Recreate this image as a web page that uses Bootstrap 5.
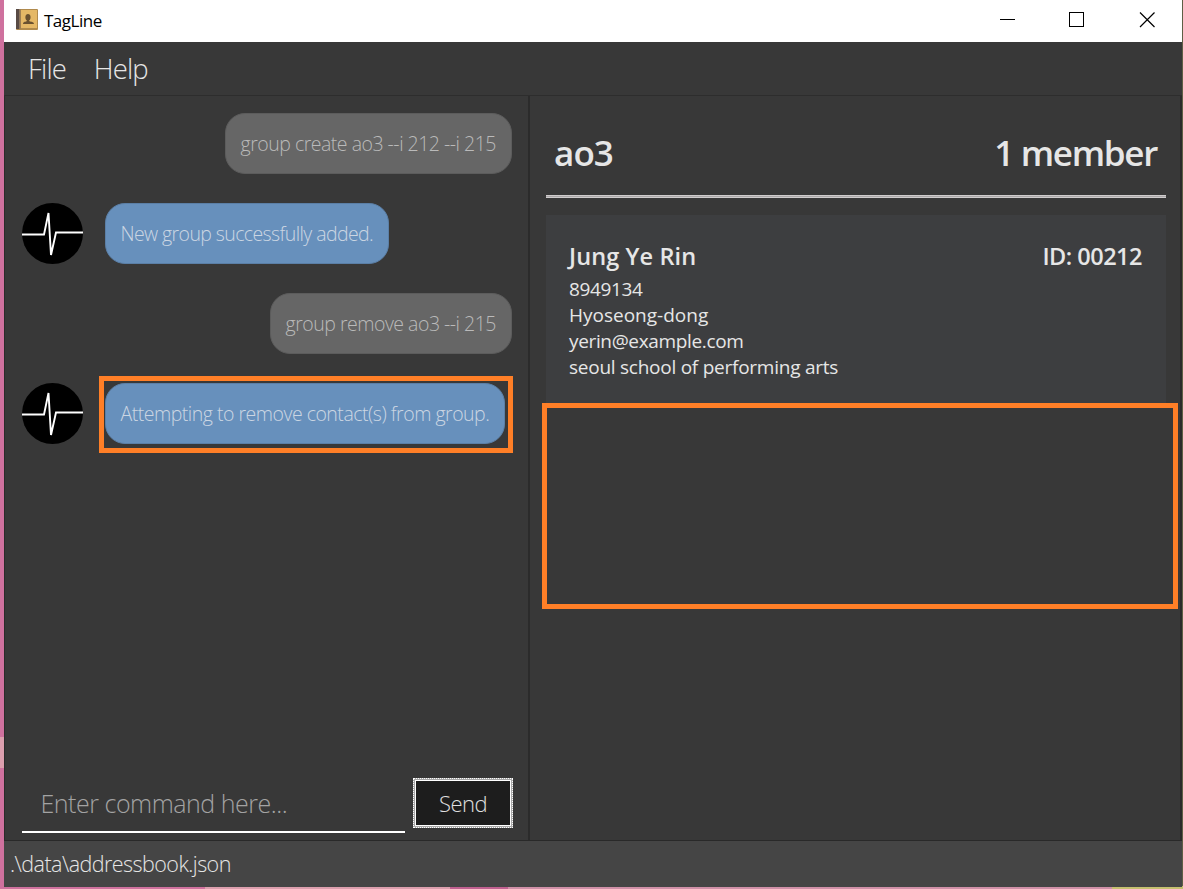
<!DOCTYPE html>
<html lang="en">
<head>
<meta charset="utf-8">
<title>TagLine</title>
<link href="https://cdn.jsdelivr.net/npm/bootstrap@5.3.0/dist/css/bootstrap.min.css" rel="stylesheet">
<style>
html,body{height:100%;overflow:hidden}
body{font-family:"Open Sans","Noto Sans",sans-serif;color:#e6e6e6;padding:0 1px 2px 4px;
 background:linear-gradient(90deg,#cf719e 0 205px,#dc9fae 205px 450px,#c06090 450px 508px,#d090a8 508px 1112px,#c6c070 1112px) bottom/100% 3px no-repeat,
 linear-gradient(#cf719e 0 737px,#dc9fae 737px 768px,#cf719e 768px) left/4px 100% no-repeat,#5f5f45}
.app-window{background:#383838}
.title-bar{height:42px;background:#fff;color:#000;padding-left:12px}
.title-text{font-size:17px;letter-spacing:-.5px;margin-left:6px}
.menu-row{height:54px;border-bottom:1px solid #2d2d2d;padding-left:24px;gap:27.5px;font-weight:300;font-size:27.5px;letter-spacing:-.8px}
.menu-row span{line-height:54px}
.main-area{border:solid #2b2b2b;border-width:0 2px 0 1px;min-height:0}
.chat-pane{width:525px;border-right:2px solid #2b2b2b;padding:17px 16.5px 7px 17px}
.chat-log{gap:30px}
.chat-row{height:60px}
.bubble{height:61px;border-radius:20px;padding:0 14.5px;line-height:60px;font-size:19.5px;font-weight:300;white-space:nowrap;position:relative;letter-spacing:-.5px}
.bubble-me{background:#666;color:#bababa;border:1px solid #5c5c5c}
.bubble-bot{background:#6790bc;color:#cbd6e3;border:1px solid #5b7fa6}
.b2{letter-spacing:-.6px}
.avatar{width:61px;height:61px;margin-right:22px;flex-shrink:0}
.mark-box{position:absolute;border:5px solid #ff7f27}
.mark-reply{inset:-8px -9px -10px -7px}
.cmd-field{width:383px;height:58px;flex-shrink:0;border:0;border-bottom:2px solid #fff;border-radius:0;background:transparent!important;padding:0 0 0 18.5px;font-size:25px;font-weight:300;box-shadow:none;letter-spacing:-.48px}
.cmd-field::placeholder{color:#a3a3a3;opacity:1}
.send-btn{width:100px;height:50px;flex-shrink:0;border-radius:0;border:1px dotted #fff;padding:1px;background:#aaa;margin:0 0 5px 8px}
.send-btn span{display:block;height:46px;border:1px solid #fff;background:#1d1d1d;color:#e0e0e0;font-size:22px;font-weight:300;line-height:44px;letter-spacing:-.5px}
.group-pane{padding:0 14px 0 16px}
.group-head{height:102px;background:linear-gradient(#cfcccd 0 1px,#aaa7a8 1px 2px,#cfcccd 2px) bottom/100% 3px no-repeat;padding:0 9px 0 8px;font-size:35px;font-weight:600;line-height:114px}
.g1{letter-spacing:-.9px}
.g2{letter-spacing:-1.3px}
.member-card{height:189px;margin-top:17px;background:#3d3e40;padding:26px 24px 0 23px;position:relative}
.member-top{font-size:23.5px;font-weight:600;line-height:30px;margin-bottom:5px}
.n1{letter-spacing:.1px}
.n2{letter-spacing:-.5px}
.member-info{font-size:19px;line-height:26px}
.i1,.i3{letter-spacing:-.35px}
.i4{letter-spacing:-.25px}
.mark-empty{left:-4px;right:-12px;top:188px;height:206px}
.status-row{height:47px;background:#454545;border-top:1px solid #292929;font-size:21.5px;font-weight:300;line-height:46px;padding-left:6px;letter-spacing:-.55px}
</style>
</head>
<body>
<div class="app-window d-flex flex-column h-100">
  <header class="title-bar d-flex align-items-center flex-shrink-0">
    <svg width="22" height="21" viewBox="0 0 22 21" class="mb-1"><rect width="22" height="21" rx="1" fill="#b08a4d"/><rect width="4" height="20" fill="#594b45"/><rect x="3" width="1.500" height="20" fill="#8c755d"/><rect x="5" y="1" width="16" height="18" fill="#e5b866"/><path d="M7 15c0-2.500 3-2 4-3.200-2.500-2-2-6.800 1-6.800s3.500 4.800 1 6.800c1 1.200 5 .7 5 3.200z" fill="#6a5130"/></svg>
    <span class="title-text">TagLine</span>
    <svg class="ms-auto" width="183" height="42" fill="none" stroke="#000" shape-rendering="crispEdges"><path d="M1 19.500h15M70.500 12.500h14v14h-14z"/><path d="M141 12.500l14.500 14.500M155.500 12.500l-14.500 14.500" stroke-width="1.200" shape-rendering="auto"/></svg>
  </header>
  <nav class="menu-row d-flex flex-shrink-0"><span>File</span><span>Help</span></nav>
  <main class="main-area d-flex flex-grow-1">
    <section class="chat-pane d-flex flex-column flex-shrink-0">
      <div class="chat-log d-flex flex-column">
        <div class="chat-row d-flex justify-content-end"><div class="bubble bubble-me">group create ao3 --i 212 --i 215</div></div>
        <div class="chat-row d-flex"><svg class="avatar" viewBox="0 0 61 61"><circle cx="30.500" cy="30.500" r="30.500"/><path d="M0 31.500h22L26.500 10 29 52l5-22.500h27" fill="none" stroke="#fff" stroke-width="1.900"/></svg><div class="bubble bubble-bot"><span class="b2">New group successfully added.</span></div></div>
        <div class="chat-row d-flex justify-content-end"><div class="bubble bubble-me">group remove ao3 --i 215</div></div>
        <div class="chat-row d-flex"><svg class="avatar" viewBox="0 0 61 61"><circle cx="30.500" cy="30.500" r="30.500"/><path d="M0 31.500h22L26.500 10 29 52l5-22.500h27" fill="none" stroke="#fff" stroke-width="1.900"/></svg><div class="bubble bubble-bot">Attempting to remove contact(s) from group.<div class="mark-box mark-reply"></div></div></div>
      </div>
      <div class="d-flex mt-auto align-items-end">
        <input class="form-control cmd-field" placeholder="Enter command here...">
        <button class="btn send-btn"><span>Send</span></button>
      </div>
    </section>
    <section class="group-pane flex-grow-1">
      <div class="group-head d-flex justify-content-between"><span class="g1">ao3</span><span class="g2">1 member</span></div>
      <article class="member-card">
        <div class="member-top d-flex justify-content-between"><span class="n1">Jung Ye Rin</span><span class="n2">ID: 00212</span></div>
        <div class="member-info"><div class="i1">8949134</div><div>Hyoseong-dong</div><div class="i3">yerin@example.com</div><div class="i4">seoul school of performing arts</div></div>
        <div class="mark-box mark-empty"></div>
      </article>
    </section>
  </main>
  <footer class="status-row flex-shrink-0">.\data\addressbook.json</footer>
</div>
<script src="https://cdn.jsdelivr.net/npm/bootstrap@5.3.0/dist/js/bootstrap.bundle.min.js"></script>
</body>
</html>
